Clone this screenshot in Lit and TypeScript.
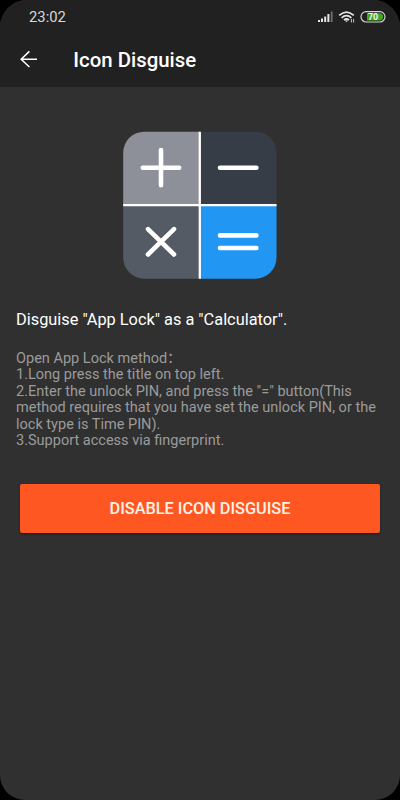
import { LitElement, html, css } from "lit";
import { customElement } from "lit/decorators.js";

@customElement("app-root")
export class AppRoot extends LitElement {
  static styles = css`
    :host {
      display: block;
      height: 100vh;
      background: #000;
      font-family: Roboto, "Noto Sans CJK SC", sans-serif;
    }
    .screen {
      height: 100%;
      box-sizing: border-box;
      background: #303030;
      border-radius: 27px 27px 25px 25px;
      overflow: hidden;
      display: flex;
      flex-direction: column;
    }
    .top { background: #212121; height: 87px; flex: none; }
    .status {
      height: 34px;
      display: flex;
      align-items: center;
      justify-content: space-between;
      padding: 0 14px 0 29px;
      color: #d8d8d8;
      font-size: 14.8px;
    }
    .status svg { display: block; }
    .bar {
      height: 53px;
      display: flex;
      align-items: center;
      color: #fff;
      padding-left: 16px;
    }
    .bar svg { margin-bottom: 3px; }
    .bar h1 {
      margin: 0 0 2px 31.3px;
      font-size: 20.4px;
      font-weight: 500;
      line-height: 24px;
    }
    .logo { display: block; margin: 44px auto 0; flex: none; }
    .headline {
      margin: 30px 16px 0;
      font-size: 16.35px;
      line-height: 22px;
      color: #fff;
      white-space: nowrap;
    }
    .steps {
      margin: 19.6px 16px 0;
      font-size: 14.52px;
      line-height: 16.5px;
      color: #9b9b9b;
      white-space: nowrap;
    }
    .action {
      margin: 34.4px 20px 0;
      height: 49px;
      border: 0;
      border-radius: 2px;
      background: #ff5722;
      box-shadow: 0 1px 2px rgba(0, 0, 0, 0.5);
      color: #fff3e6;
      font: 500 16.3px Roboto, sans-serif;
      padding: 1px 0 0;
      flex: none;
    }
  `;

  render() {
    return html`
      <div class="screen">
        <div class="top">
          <div class="status">
            <span>23:02</span>
            <svg width="70" height="16" viewBox="316 9 70 16" fill="none">
              <g fill="#e4e4e4">
                <rect x="318" y="20" width="2" height="2" />
                <rect x="321" y="18.5" width="2" height="3.5" />
                <rect x="324.2" y="16.5" width="2" height="5.5" />
                <rect x="327.4" y="14" width="2" height="8" />
                <rect x="330.8" y="11.5" width="1.8" height="10.5" fill="#707070" />
              </g>
              <g stroke="#e4e4e4" stroke-width="1.8">
                <path d="M339.2 15.4Q346.5 8.8 353.8 15.4" />
                <path d="M341.6 17.8Q346.5 13.4 351.4 17.8" />
                <path d="M344 20.1Q346.5 17.9 349 20.1" />
              </g>
              <path d="M346.5 22.3l-1.5-1.8h3z" fill="#e4e4e4" />
              <path d="M351.4 19v3.5M353.6 19v3.5" stroke="#c4c4c4" stroke-width="1" />
              <rect x="361" y="11.6" width="24" height="10.4" rx="5.2" stroke="#d4d4d4" stroke-width="1.2" />
              <path d="M367 13.2h12.5a3.6 3.6 0 0 1 0 7.2H367z" fill="#43a821" />
              <text x="373" y="19.9" text-anchor="middle" font-size="8.8" font-weight="700" fill="#f2f2f2">70</text>
            </svg>
          </div>
          <div class="bar">
            <svg width="26" height="26" viewBox="16 46 26 26" fill="none" stroke="#fff" stroke-width="1.5">
              <path d="M37 59.2H21M29.4 51.4L21.2 59.2L29.4 67" />
            </svg>
            <h1>Icon Disguise</h1>
          </div>
        </div>
        <svg class="logo" width="154" height="148" viewBox="123 131 154 148">
          <defs>
            <clipPath id="tile"><rect x="123.2" y="131.7" width="153.3" height="147" rx="21" /></clipPath>
          </defs>
          <g clip-path="url(#tile)">
            <rect x="123" y="131" width="77" height="75" fill="#8e9099" />
            <rect x="200" y="131" width="77" height="75" fill="#373d46" />
            <rect x="123" y="205" width="77" height="75" fill="#555b64" />
            <rect x="200" y="205" width="77" height="75" fill="#2196f3" />
            <path d="M199.8 131v149M123 205.1h154" stroke="#fff" stroke-width="2.3" />
          </g>
          <g fill="none" stroke="#fff" stroke-width="4.6" stroke-linecap="round">
            <path d="M142.8 167.7H179.2M161 150V185.2M220 167.7H256.4" />
            <path d="M148 229.1L174 254.5M174 229.1L148 254.5" />
            <path d="M220 235.4H256.4M220 248H256.4" />
          </g>
        </svg>
        <div class="headline">Disguise "App Lock" as a "Calculator".</div>
        <div class="steps">
          <div>Open App Lock method：</div>
          <div>1.Long press the title on top left.</div>
          <div>2.Enter the unlock PIN, and press the "=" button(This</div>
          <div>method requires that you have set the unlock PIN, or the</div>
          <div>lock type is Time PIN).</div>
          <div>3.Support access via fingerprint.</div>
        </div>
        <button class="action">DISABLE ICON DISGUISE</button>
      </div>
    `;
  }
}
